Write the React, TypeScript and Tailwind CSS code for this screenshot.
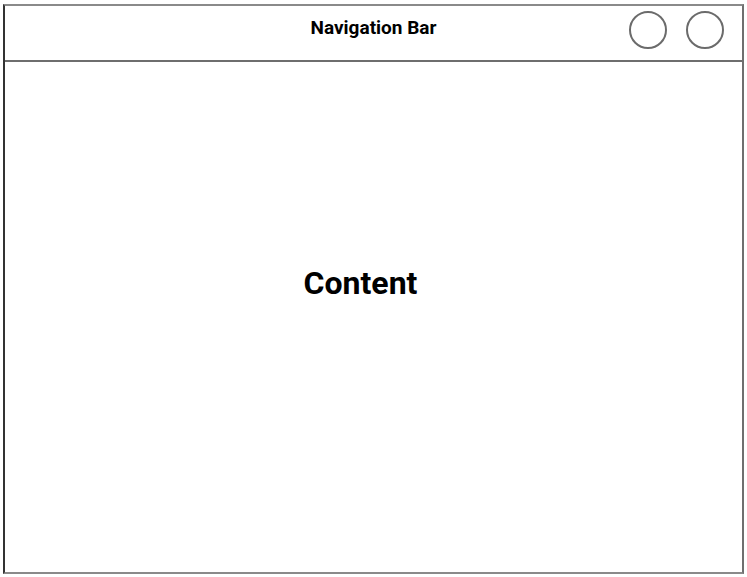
export default function App() {
  return (
    <div className="w-[747px] h-[577px] bg-white pt-[4px] pl-[3px]" style={{ fontFamily: "Roboto, 'Liberation Sans', sans-serif" }}>
      <div className="w-[741px] h-[570px] flex flex-col border-t-2 border-b-2 border-r-2 border-l-2 border-t-[#8a8a8a] border-b-[#8a8a8a] border-r-[#6f6f6f] border-l-[#333333]">
        <header className="relative h-[56px] shrink-0 flex items-center justify-center border-b-2 border-[#6e6e6e]">
          <span className="text-[19px] font-bold text-black mt-[-10px]">Navigation Bar</span>
          <div className="absolute right-[18px] top-[5px] flex gap-[19px]">
            <div className="w-[38px] h-[38px] rounded-full border-2 border-[#6b6b6b]" />
            <div className="w-[38px] h-[38px] rounded-full border-2 border-[#6b6b6b]" />
          </div>
        </header>
        <main className="flex-1 flex justify-center pt-[205px] pr-[26px]">
          <span className="text-[32px] font-bold text-black leading-none">Content</span>
        </main>
      </div>
    </div>
  );
}
